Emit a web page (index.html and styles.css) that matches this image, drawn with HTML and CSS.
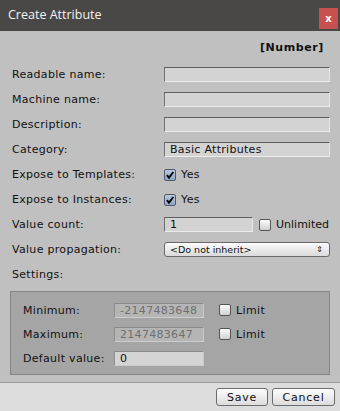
FILE: index.html
```html
<!DOCTYPE html>
<html>
<head>
<meta charset="utf-8">
<link rel="stylesheet" href="styles.css">
</head>
<body>
<div class="dialog">
  <div class="titlebar">
    <span class="title">Create Attribute</span>
    <span class="close">x</span>
  </div>
  <div class="content">
    <div class="type">[Number]</div>
    <div class="row"><span class="label">Readable name:</span><span class="input wide"></span></div>
    <div class="row"><span class="label">Machine name:</span><span class="input wide"></span></div>
    <div class="row"><span class="label">Description:</span><span class="input wide"></span></div>
    <div class="row"><span class="label">Category:</span><span class="input wide">Basic Attributes</span></div>
    <div class="row"><span class="label">Expose to Templates:</span><span class="check-wrap"><span class="cb checked"><svg viewBox="0 0 12 12" width="12" height="12"><path d="M2.3 6.2 L4.8 9.2 L10 2.4" fill="none" stroke="#000" stroke-width="2.2"/></svg></span>Yes</span></div>
    <div class="row"><span class="label">Expose to Instances:</span><span class="check-wrap"><span class="cb checked"><svg viewBox="0 0 12 12" width="12" height="12"><path d="M2.3 6.2 L4.8 9.2 L10 2.4" fill="none" stroke="#000" stroke-width="2.2"/></svg></span>Yes</span></div>
    <div class="row"><span class="label">Value count:</span><span class="inline"><span class="input count">1</span><span class="check-wrap tight"><span class="cb"></span>Unlimited</span></span></div>
    <div class="row"><span class="label">Value propagation:</span><span class="select"><span>&lt;Do not inherit&gt;</span><span class="arrows">&#8661;</span></span></div>
    <div class="row"><span class="label">Settings:</span></div>
    <div class="settings">
      <div class="srow"><span class="slabel">Minimum:</span><span class="input num disabled">-2147483648</span><span class="check-wrap"><span class="cb"></span>Limit</span></div>
      <div class="srow"><span class="slabel">Maximum:</span><span class="input num disabled">2147483647</span><span class="check-wrap"><span class="cb"></span>Limit</span></div>
      <div class="srow"><span class="slabel">Default value:</span><span class="input num">0</span></div>
    </div>
  </div>
  <div class="footer">
    <span class="btn save">Save</span>
    <span class="btn cancel">Cancel</span>
  </div>
</div>
</body>
</html>
```
FILE: styles.css
```css
html, body {
  margin: 0;
  padding: 0;
}
body {
  width: 340px;
  height: 411px;
  overflow: hidden;
  background: #c0c0c0;
  font-family: "DejaVu Sans", Verdana, sans-serif;
  font-size: 11px;
  color: #111;
}
.dialog {
  width: 340px;
  height: 411px;
  display: flex;
  flex-direction: column;
  background: #c0c0c0;
}
.titlebar {
  height: 31px;
  background: #4a4846;
  display: flex;
  align-items: center;
  justify-content: space-between;
  padding-left: 8px;
  padding-right: 2px;
  box-sizing: border-box;
}
.title {
  font-family: "Open Sans", "Noto Sans", sans-serif;
  font-size: 12.5px;
  color: #f2f2f2;
  margin-top: -2px;
}
.close {
  width: 19px;
  height: 21px;
  margin-top: 5px;
  background: #c8504f;
  color: #fff;
  font-family: "DejaVu Sans", sans-serif;
  font-weight: bold;
  font-size: 10px;
  display: flex;
  align-items: center;
  justify-content: center;
}
.content {
  flex: 1;
  padding: 0 10px 0 12px;
}
.type {
  height: 31px;
  box-sizing: border-box;
  padding-top: 10px;
  padding-right: 6px;
  text-align: right;
  font-weight: bold;
  font-size: 11px;
  letter-spacing: 0.6px;
}
.row {
  display: grid;
  grid-template-columns: 152px 1fr;
  align-items: center;
  height: 25px;
}
.label {
  letter-spacing: 0.3px;
}
.input {
  display: flex;
  align-items: center;
  box-sizing: border-box;
  height: 15px;
  background: #d3d3d3;
  border-style: solid;
  border-width: 1px;
  border-color: #5e5e5e #e6e6e6 #ececec #707070;
  padding-left: 5px;
  font-size: 11px;
  letter-spacing: 0.3px;
}
.wide {
  width: 166px;
}
.inline {
  display: flex;
  align-items: center;
}
.count {
  width: 89px;
  margin-right: 6px;
}
.check-wrap {
  display: flex;
  align-items: center;
  letter-spacing: 0.4px;
}
.check-wrap.tight {
  letter-spacing: 0;
}
.cb {
  width: 12px;
  height: 12px;
  box-sizing: border-box;
  border: 1px solid #555;
  border-radius: 2px;
  background: linear-gradient(#fbfbfb, #d0d0d0);
  margin-right: 5px;
  display: inline-flex;
  align-items: center;
  justify-content: center;
}
.cb.checked {
  background: linear-gradient(#b7c8de, #8fa6c4);
  border-color: #4f5a6a;
}
.cb svg {
  display: block;
}
.select {
  width: 166px;
  height: 15px;
  box-sizing: border-box;
  border: 1px solid #6a6a6a;
  border-radius: 3px;
  background: linear-gradient(#fbfbfb, #dadada);
  display: flex;
  align-items: center;
  justify-content: space-between;
  padding: 0 6px 0 5px;
  font-size: 9.5px;
}
.arrows {
  font-size: 8px;
}
.settings {
  margin-top: 4px;
  width: 320px;
  margin-left: -2px;
  box-sizing: border-box;
  height: 84px;
  background: #a5a5a5;
  border: 1px solid #868686;
  padding: 6px 0 0 12px;
}
.srow {
  display: flex;
  align-items: center;
  height: 24px;
}
.slabel {
  width: 91px;
  letter-spacing: 0.3px;
}
.num {
  width: 90px;
  margin-right: 15px;
  border-color: #8a8a8a #c8c8c8 #cccccc #909090;
  background: #d4d4d4;
}
.num.disabled {
  background: #b5b5b5;
  color: #707070;
}
.footer {
  height: 29px;
  background: #dcdcdc;
  border-top: 1px solid #9a9a9a;
  display: flex;
  justify-content: flex-end;
  align-items: flex-start;
  padding: 5px 5px 0 0;
  box-sizing: border-box;
  gap: 4px;
}
.btn {
  height: 18px;
  box-sizing: border-box;
  border: 1px solid #6c6c6c;
  border-radius: 3px;
  background: linear-gradient(#fdfdfd, #dcdcdc);
  display: flex;
  align-items: center;
  justify-content: center;
  letter-spacing: 0.8px;
}
.save { width: 52px; }
.cancel { width: 63px; }
```
